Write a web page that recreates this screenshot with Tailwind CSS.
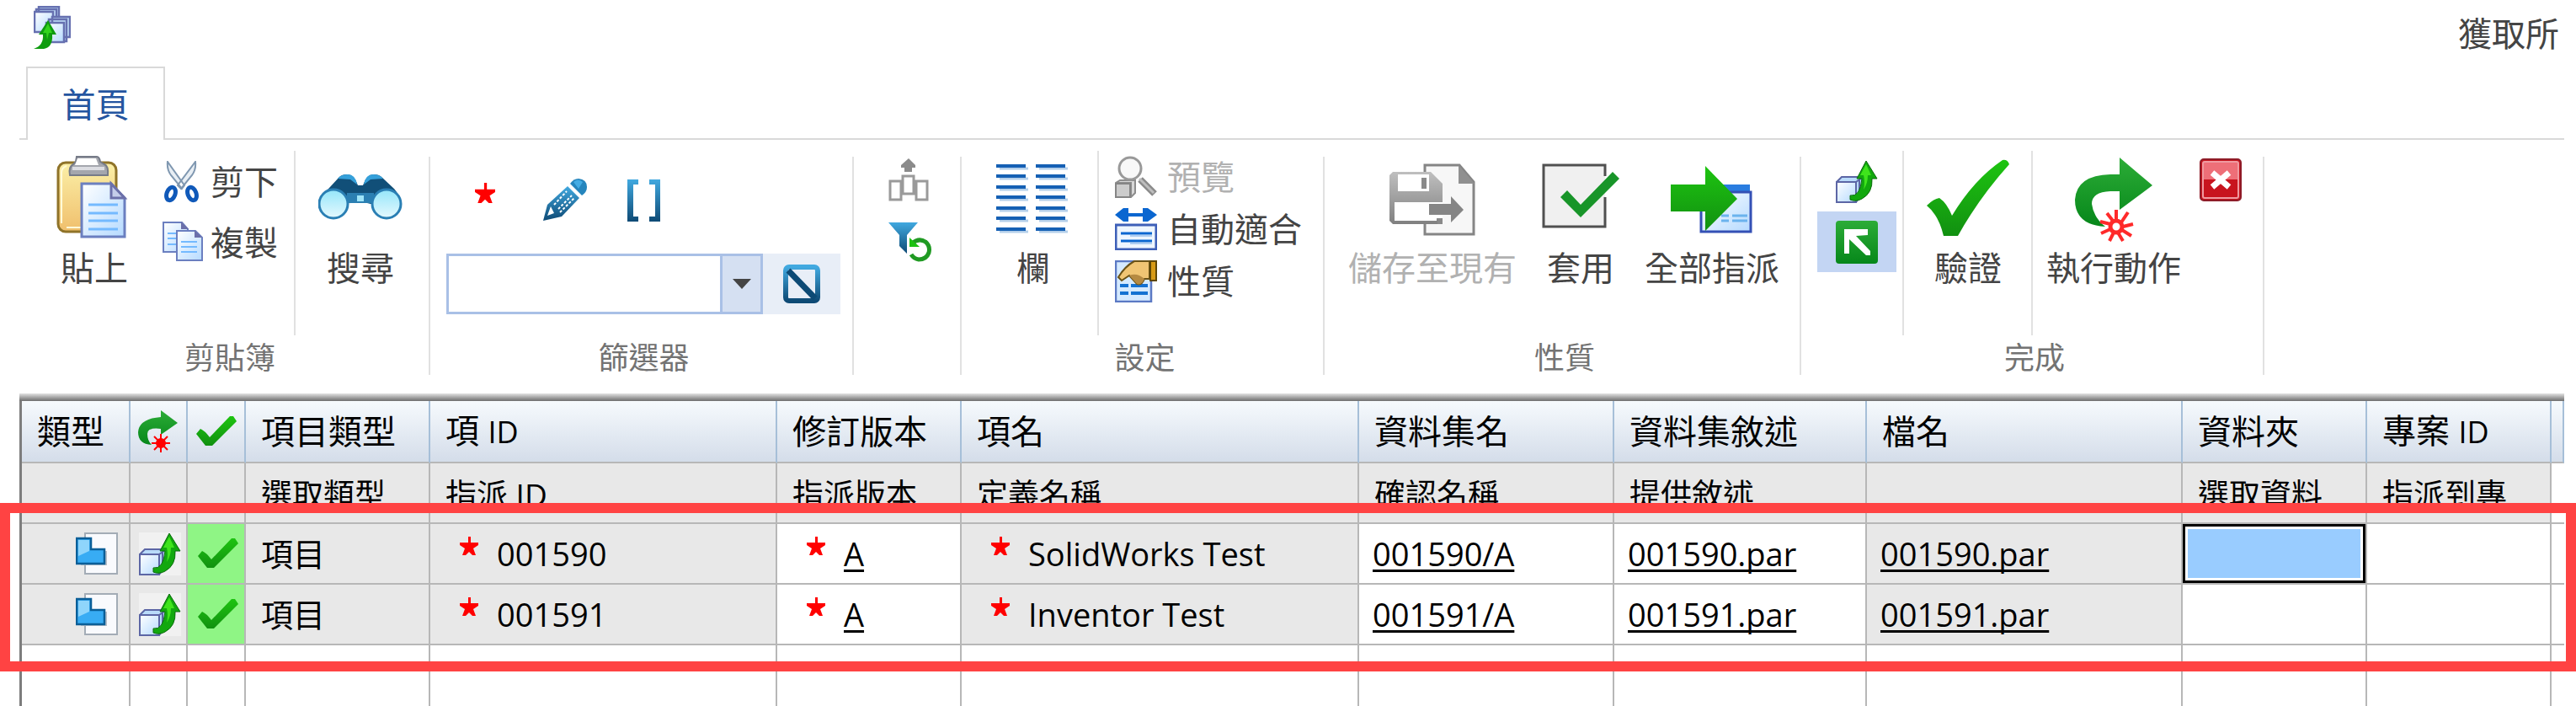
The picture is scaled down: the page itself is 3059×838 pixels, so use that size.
<!DOCTYPE html>
<html lang="zh-Hant">

<head>
    <meta charset="UTF-8">
    <title>獲取所</title>
    <meta name="viewport" content="width=device-width, initial-scale=1.0">
    <script src="https://cdn.jsdelivr.net/npm/@tailwindcss/browser@4"></script>
</head>

<body class="bg-white text-[#444] text-[40px] leading-10 overflow-hidden font-['Open_Sans','Noto_Sans_CJK_TC',sans-serif]">
    <!-- shared icons -->
    <svg class="absolute w-0 h-0" aria-hidden="true">
        <defs>
            <linearGradient id="blue" x1="0" y1="0" x2="0" y2="1"><stop offset="0" stop-color="#41a9e0"/><stop offset="1" stop-color="#0e4a75"/></linearGradient>
            <linearGradient id="green" x1="0" y1="0" x2="0" y2="1"><stop offset="0" stop-color="#1ec411"/><stop offset="1" stop-color="#119010"/></linearGradient>
            <linearGradient id="darkgreen" x1="0" y1="0" x2="0" y2="1"><stop offset="0" stop-color="#2cac37"/><stop offset="1" stop-color="#06871a"/></linearGradient>
            <linearGradient id="paper" x1="0" y1="0" x2="1" y2="1"><stop offset="0" stop-color="#fff"/><stop offset="1" stop-color="#b5daff"/></linearGradient>
            <linearGradient id="grey" x1="0" y1="0" x2="0" y2="1"><stop offset="0" stop-color="#bfbfbf"/><stop offset="1" stop-color="#808080"/></linearGradient>
            <linearGradient id="gold" x1="0" y1="0" x2="0" y2="1"><stop offset="0" stop-color="#fbf0a8"/><stop offset="1" stop-color="#f0bf6c"/></linearGradient>
            <linearGradient id="lens" x1="0" y1="0" x2="0" y2="1"><stop offset="0" stop-color="#94e6fa"/><stop offset="1" stop-color="#e6f9fe"/></linearGradient>
        </defs>
        <symbol id="star" viewBox="0 0 22 22">
            <path d="M10 0h3v7h9v3l-6 4 3 8h-4l-4-4-4 4H3l3-8-6-4V7h10z" fill="#f00"/>
        </symbol>
        <symbol id="check" viewBox="0 0 48 36">
            <path d="M0 21l5-6q5 2 11 10L40 0h4l4 6-29 29h-8z" fill="url(#green)"/>
        </symbol>
        <symbol id="cube" viewBox="0 0 50 51">
            <path d="M1 26l6-6h25v19l-8 11V26z" fill="#b9dbfa" stroke="#5c66a5" stroke-width="2"/>
            <path d="M24 26l7-5M28 23v21" stroke="#5c66a5" stroke-width="2"/>
            <path d="M1 26h23v24H1z" fill="url(#paper)" stroke="#5c66a5" stroke-width="2"/>
            <path d="M36 1l13 21h-6q1 17-12 24-7 4-14 1v-5q12 2 14-20h-6z" fill="#12a80e" stroke="#0a6b0c" stroke-width="1"/>
            <path d="M36 5l6 13h-4q0 10-5 17 2-9 0-17h-4z" fill="#3fe41c"/>
        </symbol>
        <symbol id="part" viewBox="0 0 50 50">
            <path d="M11 1h38v48H11z" fill="#f9fafd" stroke="#a3acb6" stroke-width="2"/>
            <path d="M6 33v6h31V22h-3v13z" fill="#b9bfc7"/>
            <path d="M1 7h17v13h16v17H1z" fill="#38acf4" stroke="#0a5e97" stroke-width="2.5"/>
            <path d="M3 9h13v13l-13 6z" fill="#8fd5fb"/>
        </symbol>
    </svg>

    <header class="flex justify-between h-[79px] pl-10 pr-5">
        <svg class="w-11 h-[51px] mt-[7px]" viewBox="0 0 44 51">
            <g fill="#c5e2fb" stroke="#6670b0" stroke-width="2.5">
                <path d="M6 1h24v24H6zM3 4h24v24H3z"/><path d="M1 7h22v24H1z" fill="url(#paper)"/>
                <path d="M22 13h21v24H22zM18 16h21v26H18z"/><path d="M15 20h21v23H15z" fill="url(#paper)"/>
            </g>
            <path d="M17 17l10 17h-5q1 15-10 17H0q12-4 11-17H6z" fill="#0f9c0f"/>
            <path d="M17 21l5 11h-4l-2 8-1-8h-4z" fill="#32d41c"/>
        </svg>
        <h1 class="mt-5">獲取所</h1>
    </header>

    <nav class="flex h-[87px] pl-[23px] pr-[14px]">
        <div class="w-2 border-b-2 border-[#d9d9d9]"></div>
        <button class="w-[165px] border-2 border-b-0 border-[#d9d9d9] text-[#2455a0]">首頁</button>
        <div class="flex-1 border-b-2 border-[#d9d9d9]"></div>
    </nav>

    <!-- ribbon -->
    <div class="flex h-[301px] pt-[13px] pl-[31px] whitespace-nowrap">
        <section class="w-[478px] shrink-0">
            <div class="flex h-[219px]">
                <button class="flex flex-col items-center justify-start w-20 ml-[41px] pt-1">
                    <svg class="shrink-0 w-[90px] h-[104px] mb-[11px]" viewBox="0 0 90 104">
                        <rect x="2" y="10" width="69" height="82" rx="9" fill="url(#gold)" stroke="#8f7329" stroke-width="3"/>
                        <path d="M6 82V22q0-6 6-8M12 87h18" fill="none" stroke="#fffbd8" stroke-width="2"/>
                        <path d="M24 3h24q3 0 4 6l5 3q5 2 4 13H16q-2-10 4-13l3-3z" fill="#a4a6ad" stroke="#767b88" stroke-width="2"/>
                        <path d="M25 5h22l3 8H22z" fill="#fff"/><path d="M19 15h38v4H19z" fill="#dcdde2"/>
                        <path d="M30 35h35l16 17v46H30z" fill="url(#paper)" stroke="#6b7fc0" stroke-width="3"/>
                        <path d="M65 35v17h16z" fill="#c5cdea" stroke="#6c70aa" stroke-width="3"/>
                        <path d="M38 60h35M38 70h35M38 79h35M38 89h35" stroke="#74baff" stroke-width="3"/>
                    </svg>
                    貼上
                </button>
                <div class="flex flex-col gap-[22px] pt-3 ml-[41px]">
                    <button class="flex items-center gap-[9px] h-[50px]">
                        <svg class="w-12 h-[50px]" viewBox="0 0 48 50">
                            <path d="M6 1q-1 9 4 16l13 16 3-4zM39 1q1 9-4 16L22 33l-4-4z" fill="#e8eef4" stroke="#7f97b0" stroke-width="2"/>
                            <ellipse cx="10" cy="39" rx="5" ry="8" fill="none" stroke="#1059b9" stroke-width="5" transform="rotate(20 10 39)"/>
                            <ellipse cx="35" cy="39" rx="5" ry="8" fill="none" stroke="#1059b9" stroke-width="5" transform="rotate(-20 35 39)"/>
                        </svg>
                        剪下
                    </button>
                    <button class="flex items-center gap-[9px] h-[50px]">
                        <svg class="w-12 h-[50px]" viewBox="0 0 48 50">
                            <path d="M1 1h22l7 8v27H1z" fill="url(#paper)" stroke="#6b7fc0" stroke-width="2"/><path d="M22 0l9 9h-9z" fill="#6c70aa"/>
                            <path d="M6 14h12M6 20h12M6 27h12" stroke="#74baff" stroke-width="2"/>
                            <path d="M17 11h22l8 8v27H17z" fill="url(#paper)" stroke="#6b7fc0" stroke-width="2"/><path d="M38 10l9 9h-9z" fill="#6c70aa"/>
                            <path d="M22 24h19M22 30h19M22 36h19" stroke="#74baff" stroke-width="2"/>
                        </svg>
                        複製
                    </button>
                </div>
                <div class="w-0.5 ml-[19px] bg-[#e1e1e1]"></div>
                <button class="flex flex-col items-center justify-start w-20 ml-[37px] pt-1">
                    <svg class="shrink-0 w-[100px] h-[104px] mb-[11px]" viewBox="0 0 100 104">
                        <path d="M13 40l12-13q3-3 9-3 9 0 13 13h6q4-13 13-13 6 0 9 3l15 14q6 6 7 18H62l-4-1H40L2 59q1-9 11-19z" fill="#114f78"/>
                        <path d="M23 29q4-5 12-5 9 0 11 12l-8-6zM77 29q-4-5-12-5-9 0-11 12l8-6z" fill="#35a0da"/>
                        <path d="M34 46h32v12H34z" fill="#2b7fb2"/>
                        <path d="M46 49h8v7h-8z" fill="#9fe4f8"/>
                        <circle cx="18" cy="59" r="17" fill="url(#lens)" stroke="#2a7fb4" stroke-width="3"/>
                        <circle cx="81" cy="59" r="17" fill="url(#lens)" stroke="#2a7fb4" stroke-width="3"/>
                    </svg>
                    搜尋
                </button>
            </div>
            <p class="pl-1.5 text-center text-[36px] leading-[54px] text-[#737373]">剪貼簿</p>
        </section>
        <div class="w-0.5 h-[259px] mt-[7px] shrink-0 bg-[#e1e1e1]"></div>

        <section class="w-[501px] shrink-0">
            <div class="h-[219px] pt-8 pl-[19px]">
                <div class="flex gap-[43px] pl-5">
                    <button class="flex justify-center items-start w-[52px] h-[52px] pt-1.5" aria-label="必填"><svg class="w-[24px] h-[24px]"><use href="#star"/></svg></button>
                    <button class="w-[52px] h-[52px]" aria-label="編輯">
                        <svg viewBox="0 0 52 52">
                            <path d="M29 10l14 14-21 22L0 51l5-19z" fill="url(#blue)"/>
                            <path d="M9 34l-4 11 8-3z" fill="#fff"/>
                            <path d="M13 32l15-16M18 37l16-16M20 41l17-17" stroke="#fff" stroke-width="2" stroke-dasharray="3 2"/>
                            <path d="M32 7q4-6 10-6 10 1 10 10 0 6-6 10z" fill="#2585bd"/><path d="M36 5q5-5 11 0l-5 8z" fill="#44ace4"/>
                        </svg>
                    </button>
                    <button class="w-[52px] h-[52px]" aria-label="括號">
                        <svg viewBox="0 0 52 52"><path d="M5 2h13v6h-6v38h6v6H5zM31 2h13v50H31v-6h7V8h-7z" fill="url(#blue)"/></svg>
                    </button>
                </div>
                <div class="flex mt-[38px]">
                    <div class="relative w-[376px]">
                        <select class="appearance-none block w-full h-[72px] bg-white border-[3px] border-[#a9c0e6]" aria-label="篩選器"><option></option></select>
                        <span class="absolute right-[3px] top-[3px] h-[66px] w-12 border-l-[3px] border-[#a9c0e6] bg-[#d5e0f2] flex items-center justify-center pointer-events-none">
                            <svg class="w-[22px] h-3" viewBox="0 0 22 12"><path d="M0 0h22L11 12z" fill="#444"/></svg>
                        </span>
                    </div>
                    <button class="flex items-center justify-center w-[92px] h-[72px] bg-[#e8eef7]" aria-label="清除">
                        <svg class="w-11 h-[46px]" viewBox="0 0 44 46">
                            <rect x="3" y="3" width="38" height="40" rx="4" fill="none" stroke="url(#blue)" stroke-width="6"/>
                            <path d="M6 7l32 33" stroke="#0d4a75" stroke-width="7"/>
                        </svg>
                    </button>
                </div>
            </div>
            <p class="pl-1.5 text-center text-[36px] leading-[54px] text-[#737373]">篩選器</p>
        </section>
        <div class="w-0.5 h-[259px] mt-[7px] shrink-0 bg-[#e1e1e1]"></div>

        <section class="w-[126px] shrink-0 flex flex-col gap-[21px] pt-[9px] pl-[41px]">
            <button class="w-[52px] h-[51px]" aria-label="上移">
                <svg viewBox="0 0 52 51" class="h-[51px]">
                    <path d="M24 0l8 8v3h-4v5h-9v-5h-4V8z" fill="#8b8b8b"/>
                    <path d="M2 27h13v22H2zM17 21h13v21H17zM33 27h13v22H33z" fill="#fff" stroke="#9a9a9a" stroke-width="3"/>
                </svg>
            </button>
            <button class="w-[52px] h-[51px]" aria-label="重設篩選">
                <svg viewBox="0 0 52 51" class="h-[51px]">
                    <path d="M0 4h35L22 19v22l-9-9V19z" fill="url(#blue)"/>
                    <path d="M28 29q8-7 16-2 6 5 4 13-3 8-12 8-6-1-9-6" fill="none" stroke="#209a23" stroke-width="5"/>
                    <path d="M25 22v11h12z" fill="#1cc111"/>
                </svg>
            </button>
        </section>
        <div class="w-0.5 h-[259px] mt-[7px] shrink-0 bg-[#e1e1e1]"></div>

        <section class="w-[429px] shrink-0">
            <div class="flex h-[219px]">
                <button class="flex flex-col items-center justify-start w-[88px] ml-[41px] pt-1">
                    <svg class="shrink-0 w-[88px] h-[104px] mb-[11px]" viewBox="0 0 88 104">
                        <path d="M4 17h34M51 17h34M4 29h34M51 29h34M4 42h34M51 42h34M4 54h34M51 54h34M4 67h34M51 67h34M4 79h34M51 79h34M4 92h34M51 92h34" stroke="#b4cfea" stroke-width="3"/>
                        <path d="M0 14h35M47 14h35M0 26h35M47 26h35M0 39h35M47 39h35M0 51h35M47 51h35M0 64h35M47 64h35M0 76h35M47 76h35M0 89h35M47 89h35" stroke="#1560b4" stroke-width="4"/>
                    </svg>
                    欄
                </button>
                <div class="w-0.5 ml-8 bg-[#e1e1e1]"></div>
                <div class="flex flex-col gap-3 pt-1.5 ml-[19px]">
                    <button class="flex items-center gap-3 h-[50px] text-[#b1b1b1]" disabled>
                        <svg class="w-[50px] h-[50px]" viewBox="0 0 50 50">
                            <path d="M6 29h18v15l-5 5V32H1z" fill="#d8d8d8" stroke="#8d8d8d" stroke-width="2"/><path d="M1 33h17v16H1z" fill="#ccc" stroke="#858585" stroke-width="2"/>
                            <path d="M30 28l17 17" stroke="#8b8b8b" stroke-width="8"/><path d="M29 27l17 17" stroke="#bebebe" stroke-width="3"/>
                            <circle cx="18" cy="15" r="13" fill="#f8f8f8" stroke="#999" stroke-width="3"/>
                        </svg>
                        預覽
                    </button>
                    <button class="flex items-center gap-3 h-[50px]">
                        <svg class="w-[50px] h-[50px]" viewBox="0 0 50 50">
                            <path d="M0 8l10-8h6v6h17V0h6l11 8-11 8h-6v-6H16v6h-6z" fill="#0a66d0"/>
                            <path d="M1 20h48v29H1z" fill="#eef6ff" stroke="#3d5fb8" stroke-width="3"/>
                            <path d="M7 30h37M7 39h37" stroke="#0a66d0" stroke-width="3"/><path d="M18 33h26M18 42h26" stroke="#aecdf1" stroke-width="2"/>
                        </svg>
                        自動適合
                    </button>
                    <button class="flex items-center gap-3 h-[50px]">
                        <svg class="w-[50px] h-[50px]" viewBox="0 0 50 50">
                            <path d="M1 1h42v48H1z" fill="#d5eaff" stroke="#5b79c4" stroke-width="2.5"/>
                            <path d="M6 30h10M19 30h20M6 39h10M19 39h20" stroke="#1472d2" stroke-width="4"/>
                            <path d="M23 1h18v21h-6q-3 8-9 6l-9-10-9 6-4-4Q12 7 23 1z" fill="#f0c574" stroke="#6a5318" stroke-width="2"/>
                            <path d="M17 18q9-4 18 4-3 8-9 6z" fill="#b58a42"/>
                            <path d="M42 1h7v23h-7z" fill="#d79a16" stroke="#5f4706" stroke-width="2"/>
                        </svg>
                        性質
                    </button>
                </div>
            </div>
            <p class="pl-1.5 text-center text-[36px] leading-[54px] text-[#737373]">設定</p>
        </section>
        <div class="w-0.5 h-[259px] mt-[7px] shrink-0 bg-[#e1e1e1]"></div>

        <section class="w-[564px] shrink-0">
            <div class="flex gap-9 h-[219px] pl-7">
                <button class="flex flex-col items-center justify-start w-[200px] pt-1 text-[#b1b1b1]" disabled>
                    <svg class="shrink-0 w-[102px] h-[104px] mb-[11px]" viewBox="0 0 102 104">
                        <path d="M42 13h41l17 20v62H42z" fill="#f7f7f7" stroke="#858585" stroke-width="3"/><path d="M82 13v22h19z" fill="#909090"/>
                        <path d="M4 21h45l14 14v48H4l-4-4V25z" fill="url(#grey)"/>
                        <path d="M10 24h37v20H10zM6 57h57v20l-7-1v3H6z" fill="#fff"/><path d="M38 28h6v13h-6zM57 76h6v7h-6z" fill="#8a8a8a"/>
                        <path d="M47 59h26v-9l15 16-15 15v-9H47z" fill="#858585"/>
                    </svg>
                    儲存至現有
                </button>
                <button class="flex flex-col items-center justify-start w-20 pt-1">
                    <svg class="shrink-0 w-[92px] h-[104px] mb-[11px]" viewBox="0 0 92 104">
                        <path d="M75 26V13H2v73h73V51" fill="#f0f0f0" stroke="#505050" stroke-width="3"/>
                        <path d="M22 51l8-8 16 17 38-39 8 8-46 46z" fill="#189529"/>
                    </svg>
                    套用
                </button>
                <button class="flex flex-col items-center justify-start w-[160px] pt-1">
                    <svg class="shrink-0 w-[98px] h-[104px] mb-[11px]" viewBox="0 0 98 104">
                        <path d="M55 36h39v10H55z" fill="#2a7de0"/>
                        <path d="M36 45h59v47H36z" fill="url(#paper)" stroke="#3450b5" stroke-width="3"/>
                        <path d="M60 73h9M73 73h18M60 79h9M73 79h18" stroke="#6bb3ee" stroke-width="3"/>
                        <path d="M0 36h41V14l38 39-38 38V68H0z" fill="url(#green)"/>
                    </svg>
                    全部指派
                </button>
            </div>
            <p class="pl-1.5 text-center text-[36px] leading-[54px] text-[#737373]">性質</p>
        </section>
        <div class="w-0.5 h-[259px] mt-[7px] shrink-0 bg-[#e1e1e1]"></div>

        <section class="w-[548px] shrink-0">
            <div class="flex h-[219px]">
                <div class="flex flex-col w-[94px] ml-[19px]">
                    <button class="flex items-center justify-center h-[72px]" aria-label="上傳"><svg class="w-[50px] h-[51px]"><use href="#cube"/></svg></button>
                    <button class="flex items-center justify-center h-[72px] bg-[#c3d5f3]" aria-label="最上層">
                        <svg class="w-[50px] h-[51px]" viewBox="0 0 50 51">
                            <rect width="50" height="51" rx="4" fill="url(#darkgreen)"/>
                            <path d="M10 10h28v7l-14 1 17 18v5h-5L16 22v17h-6z" fill="#fff"/>
                        </svg>
                    </button>
                </div>
                <div class="w-0.5 ml-[7px] bg-[#e1e1e1]"></div>
                <button class="flex flex-col items-center justify-start w-20 ml-9 pt-1">
                    <svg class="shrink-0 w-[98px] h-[104px] mb-[11px]" viewBox="0 0 98 104">
                        <path d="M0 61q8-8 15-9 9 6 15 21Q56 30 90 7q6-1 8 5-36 40-61 85H20Q14 72 0 61z" fill="url(#green)"/>
                    </svg>
                    驗證
                </button>
                <div class="w-0.5 ml-[35px] bg-[#e1e1e1]"></div>
                <button class="flex flex-col items-center justify-start w-[160px] ml-4 pt-1">
                    <svg class="shrink-0 w-[92px] h-[104px] mb-[11px]" viewBox="0 0 92 104">
                        <path d="M53 4l39 33-39 29V44H42q-22 1-22 15 2 16 16 27Q0 84 0 54q2-29 42-30h11z" fill="url(#darkgreen)"/>
                        <path d="M49 78V66M55 81l8-12M57 86l12-3M56 90l11 7M51 93l6 10M46 93l-5 10M42 89l-11 5M42 83l-12-3M45 79l-7-9" stroke="#ff2a2a" stroke-width="4"/>
                        <circle cx="49" cy="86" r="7" fill="#fff" stroke="#ff2a2a" stroke-width="5"/>
                    </svg>
                    執行動作
                </button>
                <button class="w-[50px] h-[51px] ml-[22px] mt-[9px]" aria-label="關閉">
                    <svg viewBox="0 0 50 51" class="h-[51px]">
                        <rect x="1" y="1" width="48" height="49" rx="4" fill="#c8141e" stroke="#8f1c28" stroke-width="2"/>
                        <path d="M4 4h42v21H4z" fill="#ee6f78"/>
                        <rect x="4" y="4" width="42" height="43" rx="2" fill="none" stroke="#ef9aa0" stroke-width="2"/>
                        <path d="M15 17l20 17M35 17L15 34" stroke="#fff" stroke-width="7"/>
                    </svg>
                </button>
            </div>
            <p class="pl-1.5 text-center text-[36px] leading-[54px] text-[#737373]">完成</p>
        </section>
        <div class="w-0.5 h-[259px] mt-[7px] shrink-0 bg-[#e1e1e1]"></div>
    </div>

    <!-- grid -->
    <main class="relative pl-[23px] pr-[14px]">
        <div class="h-[9px] bg-linear-to-b from-[#e4e4e4] to-[#6e6e6e]"></div>
        <table class="w-full table-fixed border-separate border-spacing-0 border-l-[3px] border-[#7d7d7d] text-black text-left whitespace-nowrap">
            <colgroup>
                <col class="w-[129px]"><col class="w-[68px]"><col class="w-[69px]"><col class="w-[219px]"><col class="w-[412px]"><col class="w-[219px]"><col class="w-[472px]">
                <col class="w-[303px]"><col class="w-[300px]"><col class="w-[375px]"><col class="w-[219px]"><col class="w-[219px]"><col>
            </colgroup>
            <thead>
                <tr class="h-[74px] bg-linear-to-b from-[#f6fafd] to-[#d3dce9] *:border-b-2 *:border-r-2 *:border-b-[#b7b7b7] *:border-r-[#a6bfd8] *:font-normal">
                    <th class="pl-[18px]">類型</th>
                    <th>
                        <svg class="mx-auto w-12 h-[50px]" viewBox="0 0 48 50" role="img" aria-label="動作">
                            <path d="M27 0l20 15-20 14V22q-16-2-16 6 0 8 5 13Q0 40 0 26 1 10 27 8z" fill="url(#darkgreen)"/>
                            <circle cx="27" cy="39" r="6" fill="#f00"/>
                            <path d="M27 28v22M16 39h22M19 31l16 16M35 31L19 47" stroke="#f00" stroke-width="2"/>
                        </svg>
                    </th>
                    <th><svg class="mx-auto w-12 h-9" role="img" aria-label="驗證"><use href="#check"/></svg></th>
                    <th class="pl-[18px]">項目類型</th>
                    <th class="pl-[18px]">項 <span class="text-[36px]">ID</span></th>
                    <th class="pl-[18px]">修訂版本</th>
                    <th class="pl-[18px]">項名</th>
                    <th class="pl-[18px]">資料集名</th>
                    <th class="pl-[18px]">資料集敘述</th>
                    <th class="pl-[18px]">檔名</th>
                    <th class="pl-[18px]">資料夾</th>
                    <th class="pl-[18px]">專案 <span class="text-[36px]">ID</span></th>
                    <th class="border-r-0"></th>
                </tr>
            </thead>
            <tbody>
                <tr class="h-[72px] text-[37px] *:border-b-2 *:border-r-2 *:border-[#b7b7b7] *:bg-[#e8e8e8] *:pt-1">
                    <td></td>
                    <td></td>
                    <td></td>
                    <td class="pl-[18px]">選取類型</td>
                    <td class="pl-[18px]">指派 ID</td>
                    <td class="pl-[18px]">指派版本</td>
                    <td class="pl-[18px]">定義名稱</td>
                    <td class="pl-[18px]">確認名稱</td>
                    <td class="pl-[18px]">提供敘述</td>
                    <td></td>
                    <td class="pl-[18px]">選取資料</td>
                    <td class="pl-[18px]">指派到專</td>
                    <td class="border-r-0! bg-white!"></td>
                </tr>
                <tr class="h-[72px] text-[38px] *:border-b-2 *:border-r-2 *:border-[#b7b7b7]">
                    <td class="bg-[#e8e8e8]"><svg class="ml-auto mr-[13px] w-[50px] h-[50px]"><use href="#part"/></svg></td>
                    <td class="bg-[#e8e8e8] pl-1"><svg class="mx-auto w-[50px] h-[51px] bg-[#f1f1f1]"><use href="#cube"/></svg></td>
                    <td class="bg-[#8ff585] pl-1"><svg class="mx-auto w-12 h-9"><use href="#check"/></svg></td>
                    <td class="bg-[#e8e8e8] pl-[18px]">項目</td>
                    <td class="bg-[#e8e8e8] pl-[35px]"><div class="flex gap-[22px]"><svg class="w-[22px] h-[22px]"><use href="#star"/></svg>001590</div></td>
                    <td class="pl-[35px]"><div class="flex gap-[22px]"><svg class="w-[22px] h-[22px]"><use href="#star"/></svg><a href="#" class="underline decoration-3 underline-offset-4 [text-decoration-skip-ink:none]">A</a></div></td>
                    <td class="bg-[#e8e8e8] pl-[35px]"><div class="flex gap-[22px]"><svg class="w-[22px] h-[22px]"><use href="#star"/></svg>SolidWorks Test</div></td>
                    <td class="pl-4"><a href="#" class="underline decoration-3 underline-offset-4 [text-decoration-skip-ink:none]">001590/A</a></td>
                    <td class="pl-4"><a href="#" class="underline decoration-3 underline-offset-4 [text-decoration-skip-ink:none]">001590.par</a></td>
                    <td class="bg-[#e8e8e8] pl-4"><a href="#" class="underline decoration-3 underline-offset-4 [text-decoration-skip-ink:none]">001590.par</a></td>
                    <td><div class="h-[70px] border-[3px] border-black bg-white p-[3px]"><div class="h-full bg-[#99ccff]"></div></div></td>
                    <td></td>
                    <td class="border-r-0!"></td>
                </tr>
                <tr class="h-[72px] text-[38px] *:border-b-2 *:border-r-2 *:border-[#b7b7b7]">
                    <td class="bg-[#e8e8e8]"><svg class="ml-auto mr-[13px] w-[50px] h-[50px]"><use href="#part"/></svg></td>
                    <td class="bg-[#e8e8e8] pl-1"><svg class="mx-auto w-[50px] h-[51px] bg-[#f1f1f1]"><use href="#cube"/></svg></td>
                    <td class="bg-[#8ff585] pl-1"><svg class="mx-auto w-12 h-9"><use href="#check"/></svg></td>
                    <td class="bg-[#e8e8e8] pl-[18px]">項目</td>
                    <td class="bg-[#e8e8e8] pl-[35px]"><div class="flex gap-[22px]"><svg class="w-[22px] h-[22px]"><use href="#star"/></svg>001591</div></td>
                    <td class="pl-[35px]"><div class="flex gap-[22px]"><svg class="w-[22px] h-[22px]"><use href="#star"/></svg><a href="#" class="underline decoration-3 underline-offset-4 [text-decoration-skip-ink:none]">A</a></div></td>
                    <td class="bg-[#e8e8e8] pl-[35px]"><div class="flex gap-[22px]"><svg class="w-[22px] h-[22px]"><use href="#star"/></svg>Inventor Test</div></td>
                    <td class="pl-4"><a href="#" class="underline decoration-3 underline-offset-4 [text-decoration-skip-ink:none]">001591/A</a></td>
                    <td class="pl-4"><a href="#" class="underline decoration-3 underline-offset-4 [text-decoration-skip-ink:none]">001591.par</a></td>
                    <td class="bg-[#e8e8e8] pl-4"><a href="#" class="underline decoration-3 underline-offset-4 [text-decoration-skip-ink:none]">001591.par</a></td>
                    <td></td>
                    <td></td>
                    <td class="border-r-0!"></td>
                </tr>
                <tr class="h-[72px] *:border-r-2 *:border-[#b7b7b7]">
                    <td></td><td></td><td></td><td></td><td></td><td></td><td></td><td></td><td></td><td></td><td></td><td></td><td class="border-r-0!"></td>
                </tr>
            </tbody>
        </table>
        <!-- highlight around the two item rows -->
        <div class="absolute inset-x-0 top-[130px] h-[200px] border-[12px] border-[#ff4343] pointer-events-none"></div>
    </main>
</body>

</html>
